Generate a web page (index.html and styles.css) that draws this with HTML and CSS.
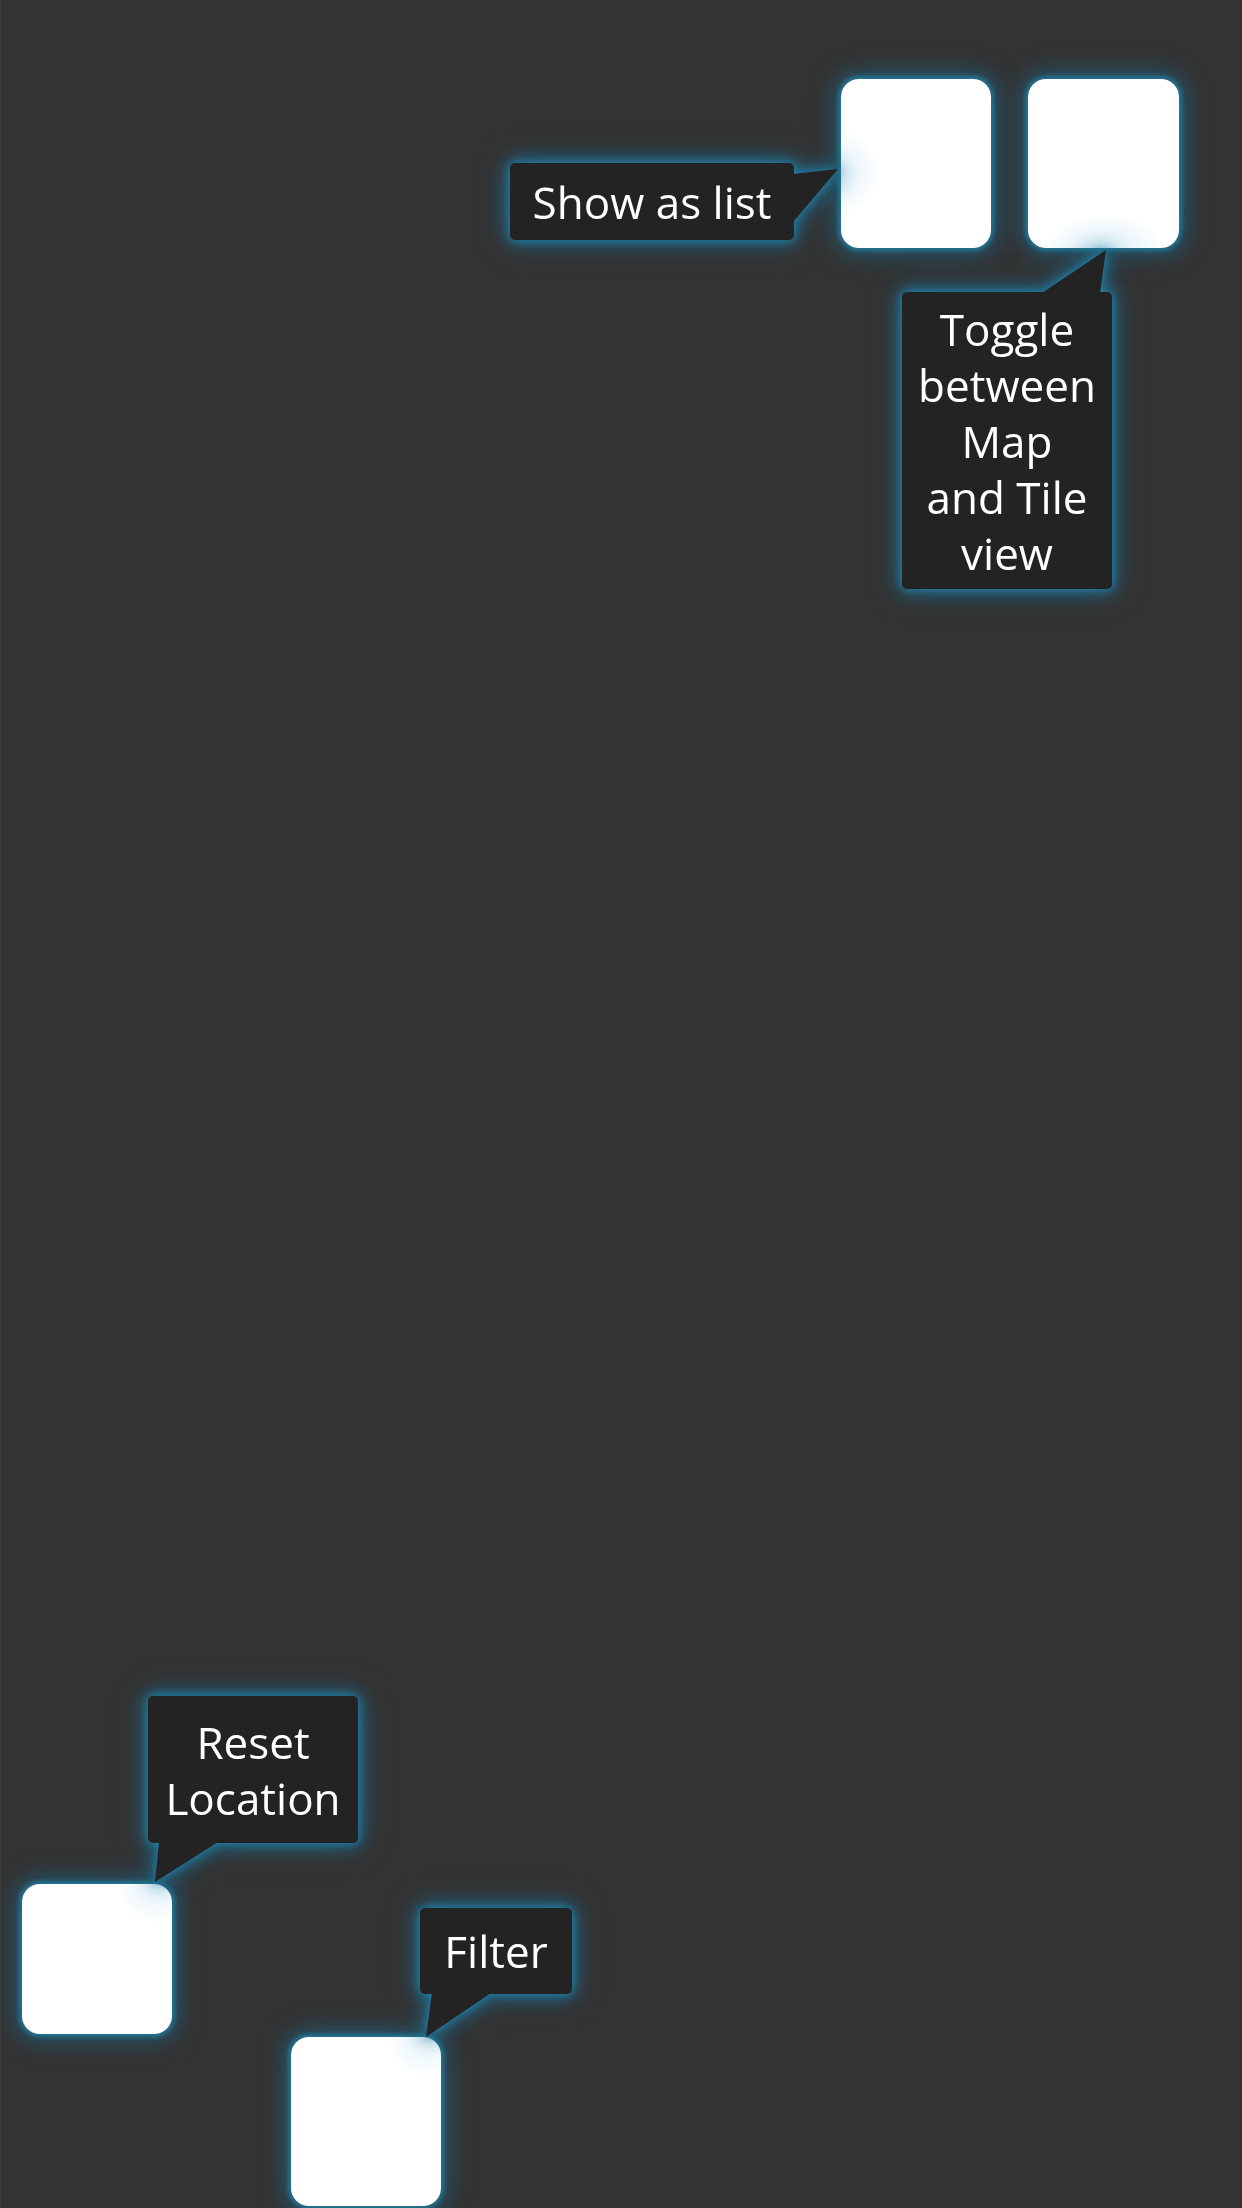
FILE: index.html
```html
<!DOCTYPE html>
<html lang="en">
<head>
<meta charset="utf-8">
<title>Map coach marks</title>
<link rel="stylesheet" href="styles.css">
</head>
<body>
<div class="screen">
  <div class="top-bar">
    <div class="fab fab-tall fab-list">
      <div class="tip tip-list">
        <svg class="tip-arrow" width="284" height="77"><polygon points="283,11 328,6 283,59"/></svg>
        <div class="tip-box">Show as list</div>
      </div>
    </div>
    <div class="fab fab-tall fab-toggle">
      <div class="tip tip-toggle">
        <svg class="tip-arrow" width="210" height="297"><polygon points="140,1 204,-42 198,1"/></svg>
        <div class="tip-box">Toggle<br>between<br>Map<br>and Tile<br>view</div>
      </div>
    </div>
  </div>
  <div class="bottom-bar">
    <div class="fab fab-square fab-reset">
      <div class="tip tip-reset">
        <svg class="tip-arrow" width="210" height="147"><polygon points="11,146 70,146 7,186"/></svg>
        <div class="tip-box">Reset<br>Location</div>
      </div>
    </div>
    <div class="fab fab-tall fab-filter">
      <div class="tip tip-filter">
        <svg class="tip-arrow" width="152" height="86"><polygon points="12,85 71,85 6,129"/></svg>
        <div class="tip-box">Filter</div>
      </div>
    </div>
  </div>
</div>
</body>
</html>
```

FILE: styles.css
```css
html, body {
  margin: 0;
  padding: 0;
  background: #333333;
}

body {
  width: 1242px;
  height: 2208px;
  overflow: hidden;
  font-family: "Open Sans", "Noto Sans", "Lato", sans-serif;
  color: #ffffff;
}

.screen {
  height: 2208px;
  display: flex;
  flex-direction: column;
  justify-content: space-between;
  box-sizing: border-box;
  border-left: 1px solid #3b3b3b;
}

.top-bar {
  display: flex;
  justify-content: flex-end;
  gap: 37px;
  padding: 79px 63px 0 0;
}

.bottom-bar {
  display: flex;
  align-items: flex-start;
  gap: 119px;
  padding: 0 0 2px 21px;
}

.fab {
  position: relative;
  width: 150px;
  background: #ffffff;
  border-radius: 18px;
  box-shadow: 0 0 4px 3px rgba(34, 118, 150, 0.95), 0 0 22px 8px rgba(28, 105, 140, 0.6);
}

.fab-tall { height: 169px; }
.fab-square { height: 150px; }
.fab-toggle { width: 151px; }
.fab-filter { margin-top: 153px; }

.fab-list { background: radial-gradient(circle at 0 92px, #e2f3fc 0, #ffffff 40px); }
.fab-toggle { background: radial-gradient(ellipse 60px 34px at 78px 169px, #ddf1fb 0, #ffffff 100%); }
.fab-reset { background: radial-gradient(circle at 134px 0, #e5f4fc 0, #ffffff 40px); }
.fab-filter { background: radial-gradient(circle at 135px 0, #e5f4fc 0, #ffffff 40px); }

.tip {
  position: absolute;
  filter: drop-shadow(0 0 4px rgba(34, 130, 168, 1)) drop-shadow(0 0 8px rgba(30, 112, 148, 0.85)) drop-shadow(0 0 12px rgba(28, 100, 135, 0.55));
}

.tip-box {
  position: relative;
  box-sizing: border-box;
  width: 100%;
  height: 100%;
  background: #232323;
  border-radius: 5px;
  display: flex;
  align-items: center;
  justify-content: center;
  text-align: center;
  font-size: 44px;
  line-height: 56px;
}

.tip-arrow {
  position: absolute;
  left: 0;
  top: 0;
  overflow: visible;
  fill: #232323;
}

.tip-list { left: -331px; top: 84px; width: 284px; height: 77px; }
.tip-toggle { left: -126px; top: 213px; width: 210px; height: 297px; }
.tip-reset { left: 126px; top: -188px; width: 210px; height: 147px; }
.tip-filter { left: 129px; top: -129px; width: 152px; height: 86px; }
```
